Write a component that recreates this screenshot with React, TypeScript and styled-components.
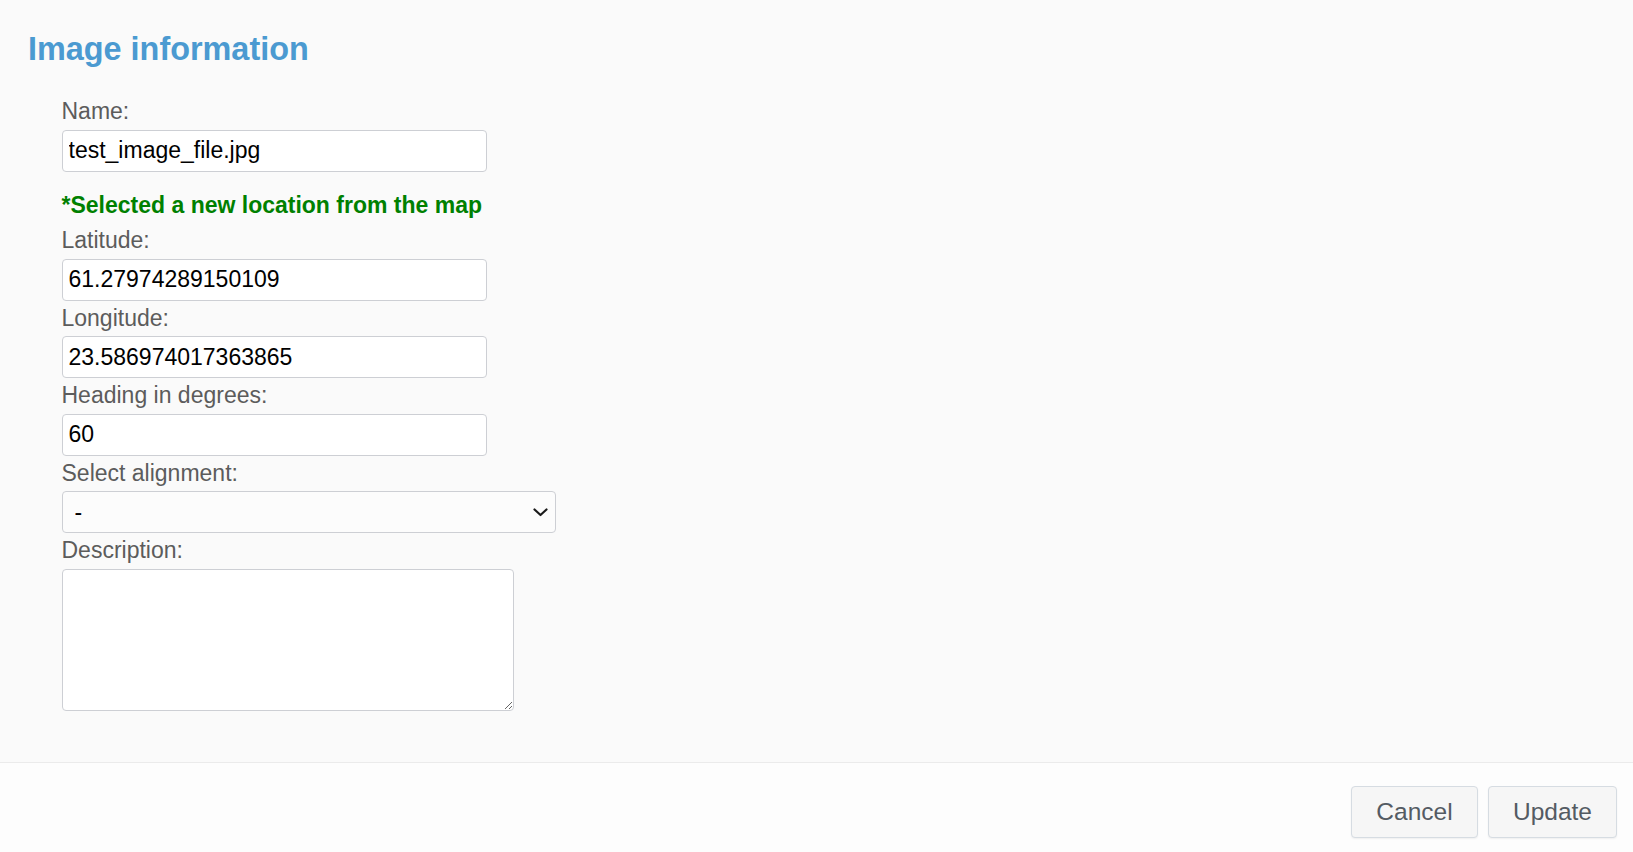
import React from "react";
import styled, { createGlobalStyle } from "styled-components";

const GlobalStyle = createGlobalStyle`
  html, body {
    margin: 0;
    padding: 0;
    background: #fdfdfd;
    overflow: hidden;
  }
  body {
    font-family: "Liberation Sans", Arial, sans-serif;
  }
  * { box-sizing: border-box; }
`;

const Page = styled.div`
  display: flex;
  flex-direction: column;
  width: 100%;
  min-height: 852px;
  background: #fdfdfd;
`;

const Main = styled.section`
  background: #fafafa;
  padding: 32px 28px 51px;
  border-bottom: 1px solid #ebebeb;
`;

const Title = styled.h2`
  margin: 0;
  font-size: 32.4px;
  line-height: 35px;
  font-weight: 700;
  color: #4b9ad1;
`;

const Form = styled.form`
  display: flex;
  flex-direction: column;
  margin: 27px 0 0 33.5px;
`;

const Label = styled.label`
  display: block;
  font-size: 23px;
  line-height: 35.5px;
  color: #5c5c5c;
`;

const Note = styled.div`
  margin-top: 16px;
  font-size: 23px;
  line-height: 35.5px;
  font-weight: 700;
  color: #008000;
`;

const TextInput = styled.input`
  display: block;
  width: 425px;
  height: 42px;
  margin: 0;
  padding: 0 6px;
  border: 1px solid #cdcfd4;
  border-radius: 4px;
  background: #fff;
  font-family: "Liberation Sans", Arial, sans-serif;
  font-size: 23px;
  color: #000;
  outline: none;
`;

const SelectWrap = styled.div`
  position: relative;
  width: 494px;
  height: 42px;
`;

const Select = styled.select`
  display: block;
  width: 100%;
  height: 100%;
  margin: 0;
  padding: 0 40px 0 12px;
  border: 1px solid #cdcfd4;
  border-radius: 4px;
  background: #fcfcfc;
  font-family: "Liberation Sans", Arial, sans-serif;
  font-size: 23px;
  color: #000;
  appearance: none;
  -webkit-appearance: none;
  outline: none;
`;

const Chevron = styled.svg`
  position: absolute;
  right: 8px;
  top: 17px;
  width: 15px;
  height: 9px;
  pointer-events: none;
`;

const TextArea = styled.textarea`
  display: block;
  width: 452px;
  height: 142px;
  margin: 0;
  padding: 6px;
  border: 1px solid #cdcfd4;
  border-radius: 4px;
  background: #fff;
  font-family: "Liberation Sans", Arial, sans-serif;
  font-size: 23px;
  color: #000;
  outline: none;
`;

const Footer = styled.footer`
  display: flex;
  justify-content: flex-end;
  gap: 10px;
  padding: 23px 16px 15px;
  background: #fdfdfd;
`;

const Button = styled.button<{ $width: number }>`
  width: ${(p) => p.$width}px;
  height: 52px;
  padding: 0;
  border: 1px solid #d6dce2;
  border-radius: 4px;
  background: #f6f6f6;
  box-shadow: 0 1px 2px rgba(0, 0, 0, 0.06);
  font-family: "Liberation Sans", Arial, sans-serif;
  font-size: 24.5px;
  color: #545b63;
  cursor: pointer;
`;

type FieldProps = { label: string; value: string };

const Field: React.FC<FieldProps> = ({ label, value }) => (
  <>
    <Label>{label}</Label>
    <TextInput type="text" defaultValue={value} />
  </>
);

export default function App() {
  return (
    <>
      <GlobalStyle />
      <Page>
        <Main>
          <Title>Image information</Title>
          <Form onSubmit={(e) => e.preventDefault()}>
            <Field label="Name:" value="test_image_file.jpg" />
            <Note>*Selected a new location from the map</Note>
            <Field label="Latitude:" value="61.27974289150109" />
            <Field label="Longitude:" value="23.586974017363865" />
            <Field label="Heading in degrees:" value="60" />
            <Label>Select alignment:</Label>
            <SelectWrap>
              <Select defaultValue="-">
                <option value="-">-</option>
              </Select>
              <Chevron viewBox="0 0 15 9">
                <path
                  d="M1.5 1.5 L7.5 7 L13.5 1.5"
                  fill="none"
                  stroke="#1a1a1a"
                  strokeWidth="2.2"
                  strokeLinecap="round"
                  strokeLinejoin="round"
                />
              </Chevron>
            </SelectWrap>
            <Label>Description:</Label>
            <TextArea />
          </Form>
        </Main>
        <Footer>
          <Button type="button" $width={127}>Cancel</Button>
          <Button type="button" $width={129}>Update</Button>
        </Footer>
      </Page>
    </>
  );
}
